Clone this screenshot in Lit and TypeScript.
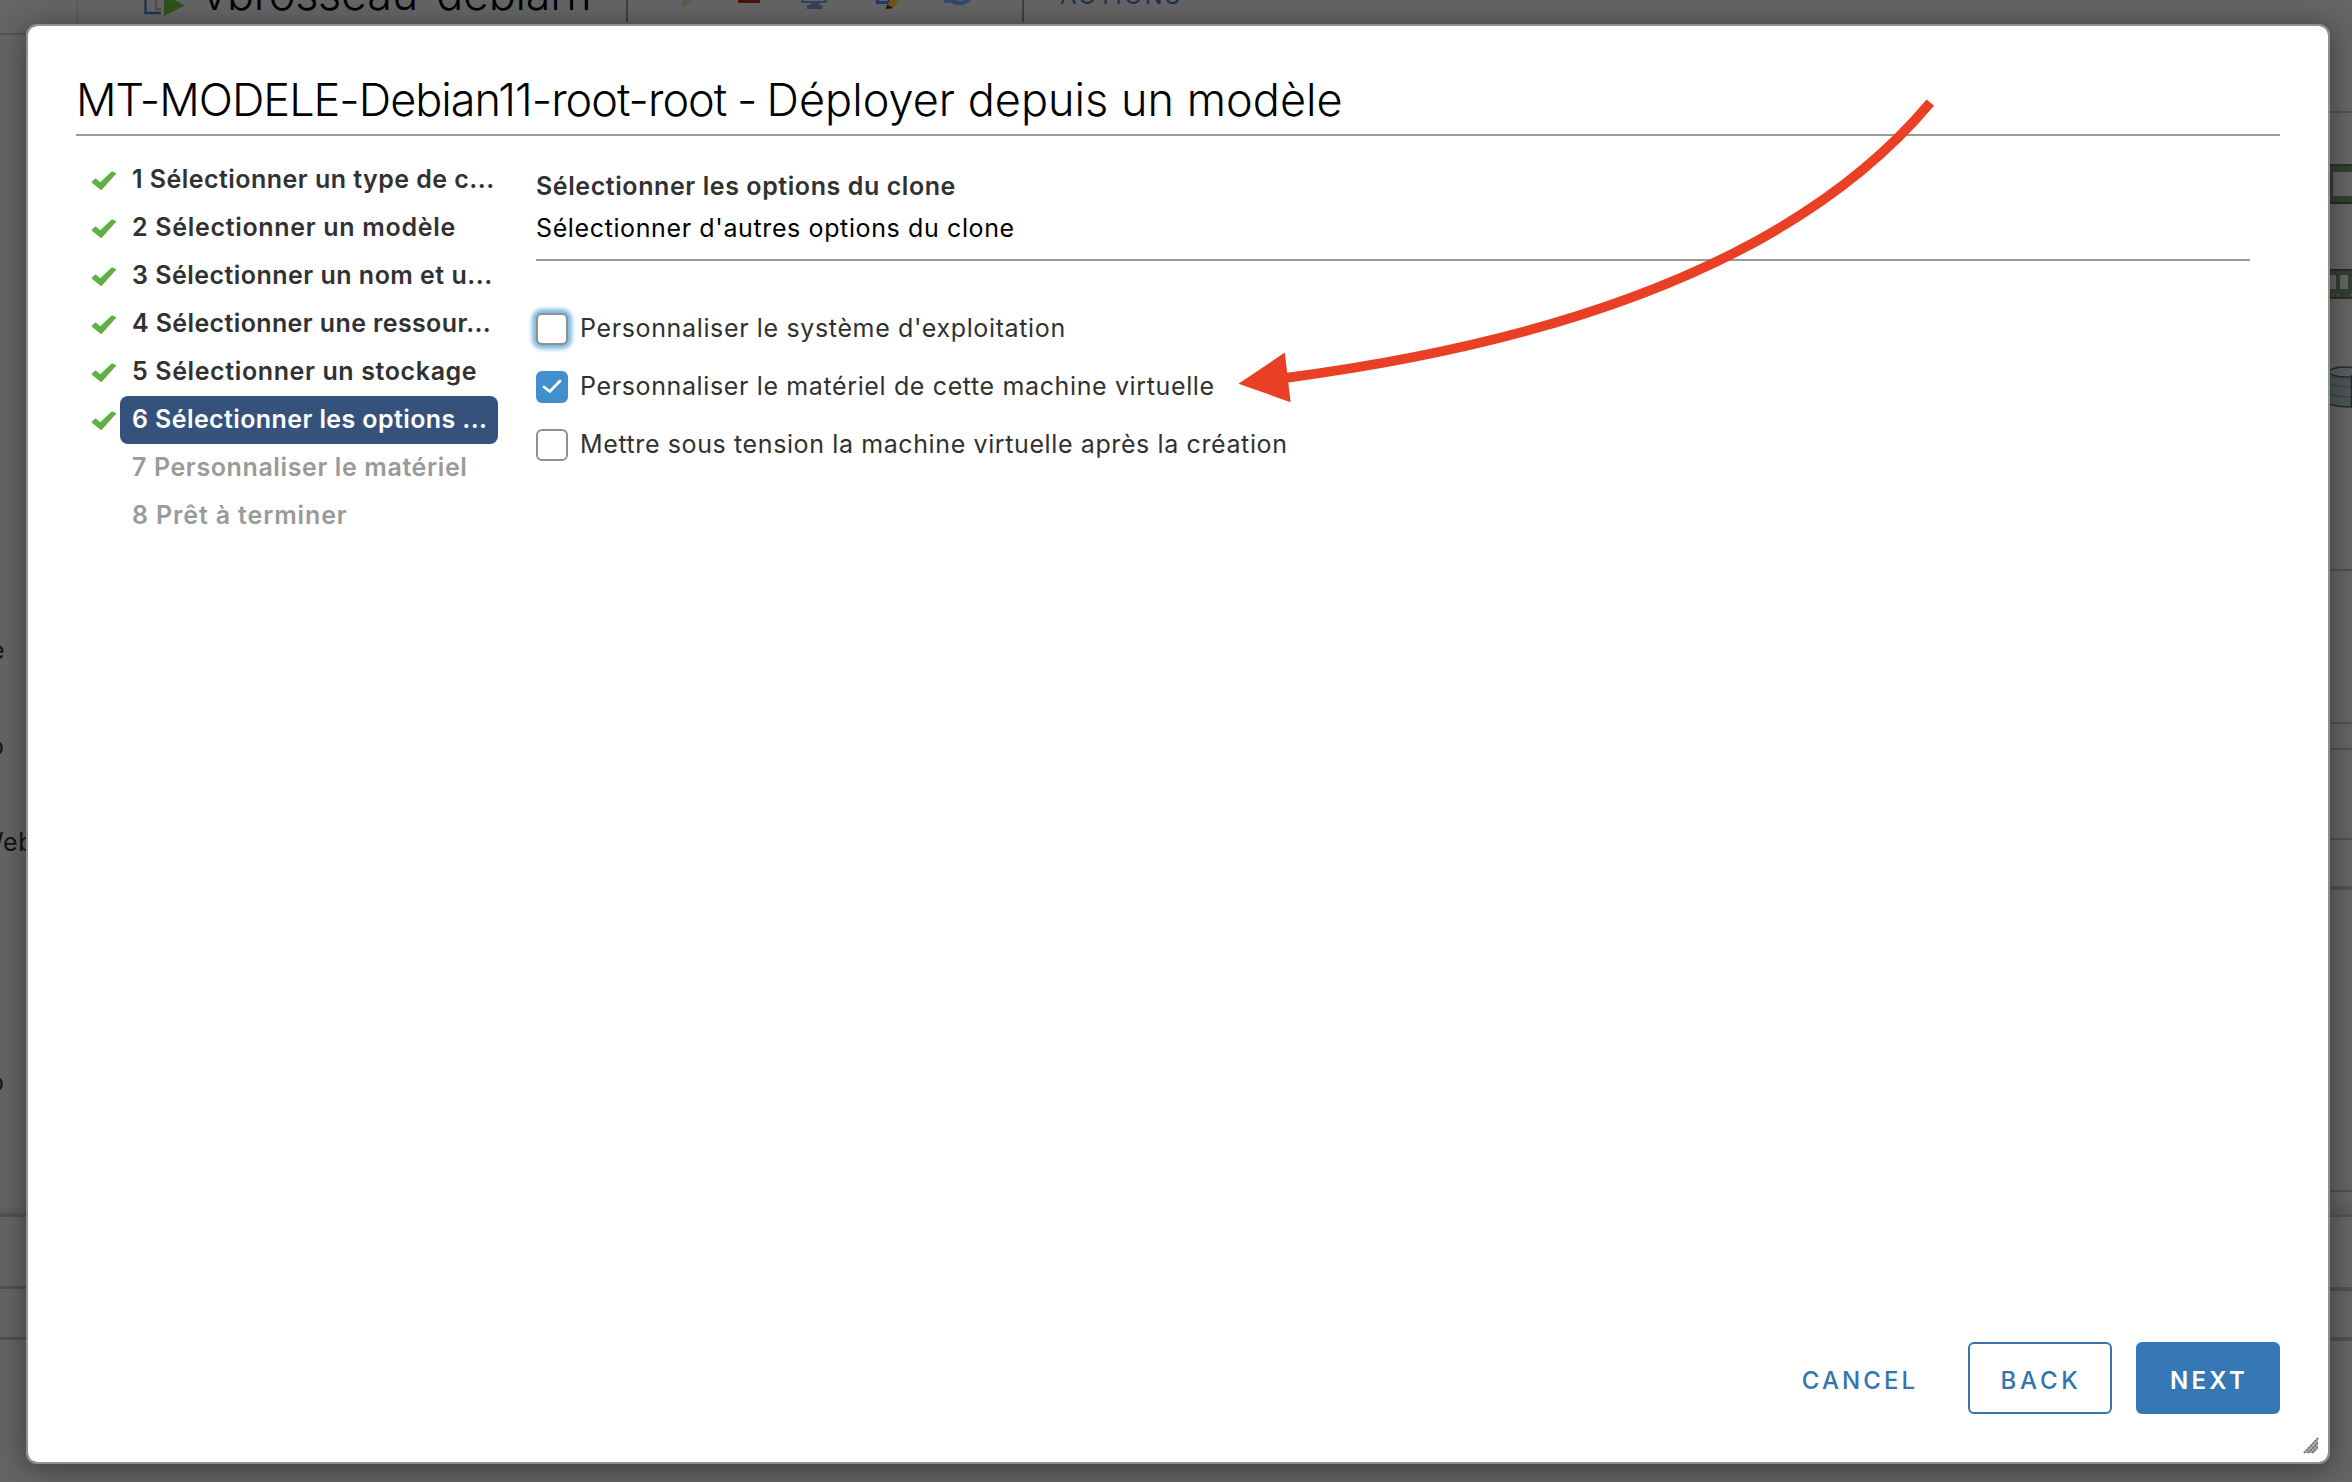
import { LitElement, html, svg, css } from "lit";
import { customElement } from "lit/decorators.js";
import { classMap } from "lit/directives/class-map.js";

interface Step {
  label: string;
  tracking: number;
  state: "done" | "current" | "todo";
}

interface Option {
  label: string;
  tracking: number;
  checked: boolean;
  focused: boolean;
}

const STEPS: Step[] = [
  { label: "1 Sélectionner un type de c...", tracking: 0.46, state: "done" },
  { label: "2 Sélectionner un modèle", tracking: 0.69, state: "done" },
  { label: "3 Sélectionner un nom et u...", tracking: 0.48, state: "done" },
  { label: "4 Sélectionner une ressour...", tracking: 0.38, state: "done" },
  { label: "5 Sélectionner un stockage", tracking: 0.62, state: "done" },
  { label: "6 Sélectionner les options ...", tracking: 0.4, state: "current" },
  { label: "7 Personnaliser le matériel", tracking: 0.61, state: "todo" },
  { label: "8 Prêt à terminer", tracking: 0.86, state: "todo" },
];

const OPTIONS: Option[] = [
  { label: "Personnaliser le système d'exploitation", tracking: 0.64, checked: false, focused: true },
  { label: "Personnaliser le matériel de cette machine virtuelle", tracking: 0.63, checked: true, focused: false },
  { label: "Mettre sous tension la machine virtuelle après la création", tracking: 0.61, checked: false, focused: false },
];

/** The dimmed vSphere page that stays visible around the dialog. */
@customElement("dimmed-page")
export class DimmedPage extends LitElement {
  static styles = css`
    :host { display: block; height: 1482px; background: #656565; }
    svg { display: block; }
    .title { font: 300 45px Inter, sans-serif; letter-spacing: -0.3px; fill: #000; }
    .actions { font: 400 24px Inter, sans-serif; letter-spacing: 2.2px; fill: #19324b; }
    .side { font: 400 25px Inter, sans-serif; letter-spacing: 0.6px; fill: #141414; }
  `;

  render() {
    const line = (x: number, y: number, w: number, h: number, fill = "#515151") =>
      svg`<rect x=${x} y=${y} width=${w} height=${h} fill=${fill} />`;
    return html`
      <svg width="2352" height="1482" viewBox="0 0 2352 1482">
        <defs>
          <linearGradient id="g" x1="0" x2="0" y1="0" y2="1">
            <stop offset="0" stop-color="#505050" stop-opacity="0" />
            <stop offset="1" stop-color="#505050" stop-opacity="0.5" />
          </linearGradient>
        </defs>
        ${line(76, 0, 2, 26, "#5c5c5c")}
        ${line(0, 33, 40, 2, "#545454")}
        <path d="M145.500 0V13H161" fill="none" stroke="#20384b" stroke-width="2.400" />
        <path d="M156 0V9H161" fill="none" stroke="#4f4f4f" stroke-width="2" />
        <path d="M164 -6L184.500 5.500L164 16Z" fill="#31521b" />
        <text class="title" x="202" y="10">vbrosseau-debian1</text>
        ${line(626, 0, 2, 22, "#404040")}
        ${line(1022, 0, 2, 22, "#404040")}
        <path d="M682 -4H698L685 7H682Z" fill="#53634a" />
        ${line(738, -2, 22, 5, "#4d100c")}
        <path d="M801 -1H827V3H819V5H822V9H807V5H810V3H801Z" fill="#394255" />
        <path d="M804 -1H824V1H804Z" fill="#59677d" />
        <path d="M876 -1H890V4H876Z" fill="#223a60" />
        <path d="M879 -1H888V1H879Z" fill="#5b6472" />
        <path d="M886 9L888 3L895 -3H902L893 8Z" fill="#75521a" />
        <path d="M886 9L887 4.500L893 8Z" fill="#1a1408" />
        <path d="M944 -1V3H951Q962 9 973 -1L966 -1Q961 3 954 -1Z" fill="#33496d" />
        <text class="actions" x="1060" y="4">ACTIONS</text>

        <text class="side" x="-10" y="659">e</text>
        <text class="side" x="-11" y="755">o</text>
        <text class="side" x="-21" y="851">Web</text>
        <text class="side" x="-11" y="1091">o</text>
        <rect x="0" y="1205" width="28" height="9" fill="url(#g)" />
        ${line(0, 1214, 28, 3)}
        ${line(0, 1286, 28, 3)}
        ${line(0, 1337, 28, 3)}

        ${line(2330, 111, 22, 2)}
        <path d="M2328 165H2352V204H2328Z" fill="#333f33" />
        <path d="M2333 172H2352V196H2333Z" fill="#656565" />
        <path d="M2328 165H2352M2328 203H2352" stroke="#1a2b1c" stroke-width="1.600" />
        <path d="M2328 269H2352V298H2328Z" fill="#333f33" />
        <path d="M2328 275H2336V289H2328ZM2340 275H2348V289H2340Z" fill="#656565" />
        <path d="M2328 269.800H2352M2328 298H2352" stroke="#1a2b1c" stroke-width="1.600" />
        <path d="M2333 293V297M2338 293V297M2351 293V297" stroke="#59543a" stroke-width="1.500" />
        <path d="M2330 372V404Q2336 407 2351 407V372Z" fill="#4d5558" />
        <ellipse cx="2345" cy="372" rx="16" ry="5" fill="#5c5f60" stroke="#272b2d" stroke-width="1.500" />
        <path d="M2329 384Q2337 387 2352 387M2329 394Q2337 397 2352 397" fill="none" stroke="#383e41" stroke-width="1.200" />
        <path d="M2329 404Q2337 407 2352 407M2351.500 375V407" fill="none" stroke="#272b2d" stroke-width="1.500" />
        ${line(2330, 569, 22, 2)}
        ${line(2330, 722, 22, 2)}
        ${line(2330, 748, 22, 2)}
        ${line(2330, 838, 22, 2)}
        ${line(2330, 886, 22, 4, "#545454")}
        ${line(2330, 1190, 22, 2)}
        <rect x="2330" y="1199" width="22" height="16" fill="url(#g)" />
        ${line(2330, 1215, 22, 2)}
        ${line(2330, 1287, 22, 4)}
        ${line(2330, 1337, 22, 4, "#515151")}
      </svg>
    `;
  }
}

/** Vertical list of wizard steps. */
@customElement("wizard-steps")
export class WizardSteps extends LitElement {
  static styles = css`
    :host { display: flex; flex-direction: column; width: 422px; }
    .step { display: flex; height: 48px; }
    .mark { width: 44px; display: flex; align-items: center; }
    .mark svg { display: block; margin: 1px 0 0 15px; }
    .label {
      width: 378px;
      box-sizing: border-box;
      padding-left: 12px;
      border-radius: 8px;
      font: 600 25px/46px Inter, sans-serif;
      white-space: nowrap;
      color: #313131;
    }
    .current .label { background: #35527d; color: #fff; }
    .todo .label { color: #9a9a9a; }
  `;

  render() {
    return STEPS.map(
      (s) => html`
        <div class=${classMap({ step: true, [s.state]: true })}>
          <div class="mark">
            ${s.state === "todo"
              ? null
              : html`<svg width="26" height="20" viewBox="0 0 26 20">
                  <path
                    d="M.8 10.600L4 7.700Q4.800 7.200 5.600 7.900L9.300 11.300L19.800 1.200Q21 .3 22.200.8L24.800 2Q25.400 2.600 24.800 3.300L11.200 18.300Q10 19.600 8.900 18.300L.9 11.700Q.4 11.100.8 10.600Z"
                    fill="#62ae49" />
                </svg>`}
          </div>
          <div class="label" style="letter-spacing:${s.tracking}px">${s.label}</div>
        </div>
      `
    );
  }
}

@customElement("app-root")
export class AppRoot extends LitElement {
  static styles = css`
    :host {
      display: block;
      position: relative;
      width: 2352px;
      height: 1482px;
      overflow: hidden;
      font-family: Inter, sans-serif;
    }
    .dialog {
      position: absolute;
      inset: 24px 22px 18px 26px;
      box-sizing: border-box;
      display: flex;
      flex-direction: column;
      padding: 50px 48px 48px;
      background: #fff;
      background-clip: padding-box;
      border: 2px solid #8f8f8f;
      border-radius: 11px;
      box-shadow: 0 4px 28px 2px rgba(0, 0, 0, 0.38);
    }
    .header {
      padding-bottom: 10px;
      border-bottom: 2px solid #9a9a9a;
    }
    .title {
      margin: 0;
      font-size: 45px;
      font-weight: 300;
      line-height: 48px;
      white-space: nowrap;
      color: #000;
    }
    .name { letter-spacing: -0.98px; }
    .dash { letter-spacing: -1.8px; }
    .action { letter-spacing: 0.03px; }
    .body { flex: 1; display: flex; padding-top: 20px; gap: 38px; }
    .panel { flex: 1; margin-right: 30px; padding-top: 9px; }
    .intro {
      padding-bottom: 10px;
      border-bottom: 2px solid #9a9a9a;
      font-size: 25px;
      line-height: 42px;
    }
    .heading { font-weight: 600; letter-spacing: 0.58px; color: #313131; }
    .sub { letter-spacing: 0.62px; color: #000; }
    .options { display: flex; flex-direction: column; padding-top: 39px; }
    .option { display: flex; align-items: center; gap: 12px; height: 58px; }
    .box {
      width: 32px;
      height: 32px;
      box-sizing: border-box;
      border: 2px solid #8f8f8f;
      border-radius: 6px;
      background: #fff;
    }
    .box svg { display: block; }
    .checked { border: none; background: #4190cd; }
    .focused { box-shadow: 0 0 4px 4px #7db9dc; }
    .text {
      padding-bottom: 2px;
      font-size: 25px;
      line-height: 32px;
      white-space: nowrap;
      color: #313131;
    }
    .footer { display: flex; justify-content: flex-end; gap: 24px; height: 72px; }
    .btn {
      width: 144px;
      box-sizing: border-box;
      padding: 5px 0 0 2px;
      border: 2px solid transparent;
      border-radius: 6px;
      background: none;
      font: 500 24px/1 Inter, sans-serif;
      letter-spacing: 3.7px;
      color: #3575ae;
    }
    .cancel { margin-right: 13px; letter-spacing: 3.1px; }
    .back { border-color: #3b74a9; }
    .next { background: #3678b5; color: #fff; font-weight: 600; letter-spacing: 3.3px; }
    .grip { position: absolute; right: 9px; bottom: 8px; }
    .arrow { position: absolute; left: 1230px; top: 90px; }
  `;

  render() {
    return html`
      <dimmed-page></dimmed-page>
      <div class="dialog">
        <div class="header">
          <h1 class="title"><span class="name">MT-MODELE-Debian11-root-root</span><span class="dash"> - </span><span class="action">Déployer depuis un modèle</span></h1>
        </div>
        <div class="body">
          <wizard-steps></wizard-steps>
          <div class="panel">
            <div class="intro">
              <div class="heading">Sélectionner les options du clone</div>
              <div class="sub">Sélectionner d'autres options du clone</div>
            </div>
            <div class="options">
              ${OPTIONS.map(
                (o) => html`
                  <div class="option">
                    <div class=${classMap({ box: true, checked: o.checked, focused: o.focused })}>
                      ${o.checked
                        ? html`<svg width="32" height="32" viewBox="0 0 32 32">
                            <path d="M8 16L13.800 20.500L24 10" fill="none" stroke="#fff" stroke-width="2.800" stroke-linecap="round" stroke-linejoin="miter" />
                          </svg>`
                        : null}
                    </div>
                    <div class="text" style="letter-spacing:${o.tracking}px">${o.label}</div>
                  </div>
                `
              )}
            </div>
          </div>
        </div>
        <div class="footer">
          <button class="btn cancel">CANCEL</button>
          <button class="btn back">BACK</button>
          <button class="btn next">NEXT</button>
        </div>
        <svg class="grip" width="16" height="17" viewBox="0 0 16 17">
          <path d="M0 16L15 0V12L11 16Z" fill="#b4b4b4" />
          <path d="M1 16L15 1M5 16L15 5.500M9 16L15 9.500" stroke="#6f6f6f" stroke-width="1.800" stroke-dasharray="2.200 0.900" />
        </svg>
      </div>
      <svg class="arrow" width="720" height="330" viewBox="1230 90 720 330">
        <path d="M1286 377.800Q1751 316.500 1930.300 102.700" fill="none" stroke="#e94025" stroke-width="9.800" />
        <path d="M1238.500 383.700L1284.800 352.500L1290.600 402.200Z" fill="#e94025" />
      </svg>
    `;
  }
}
